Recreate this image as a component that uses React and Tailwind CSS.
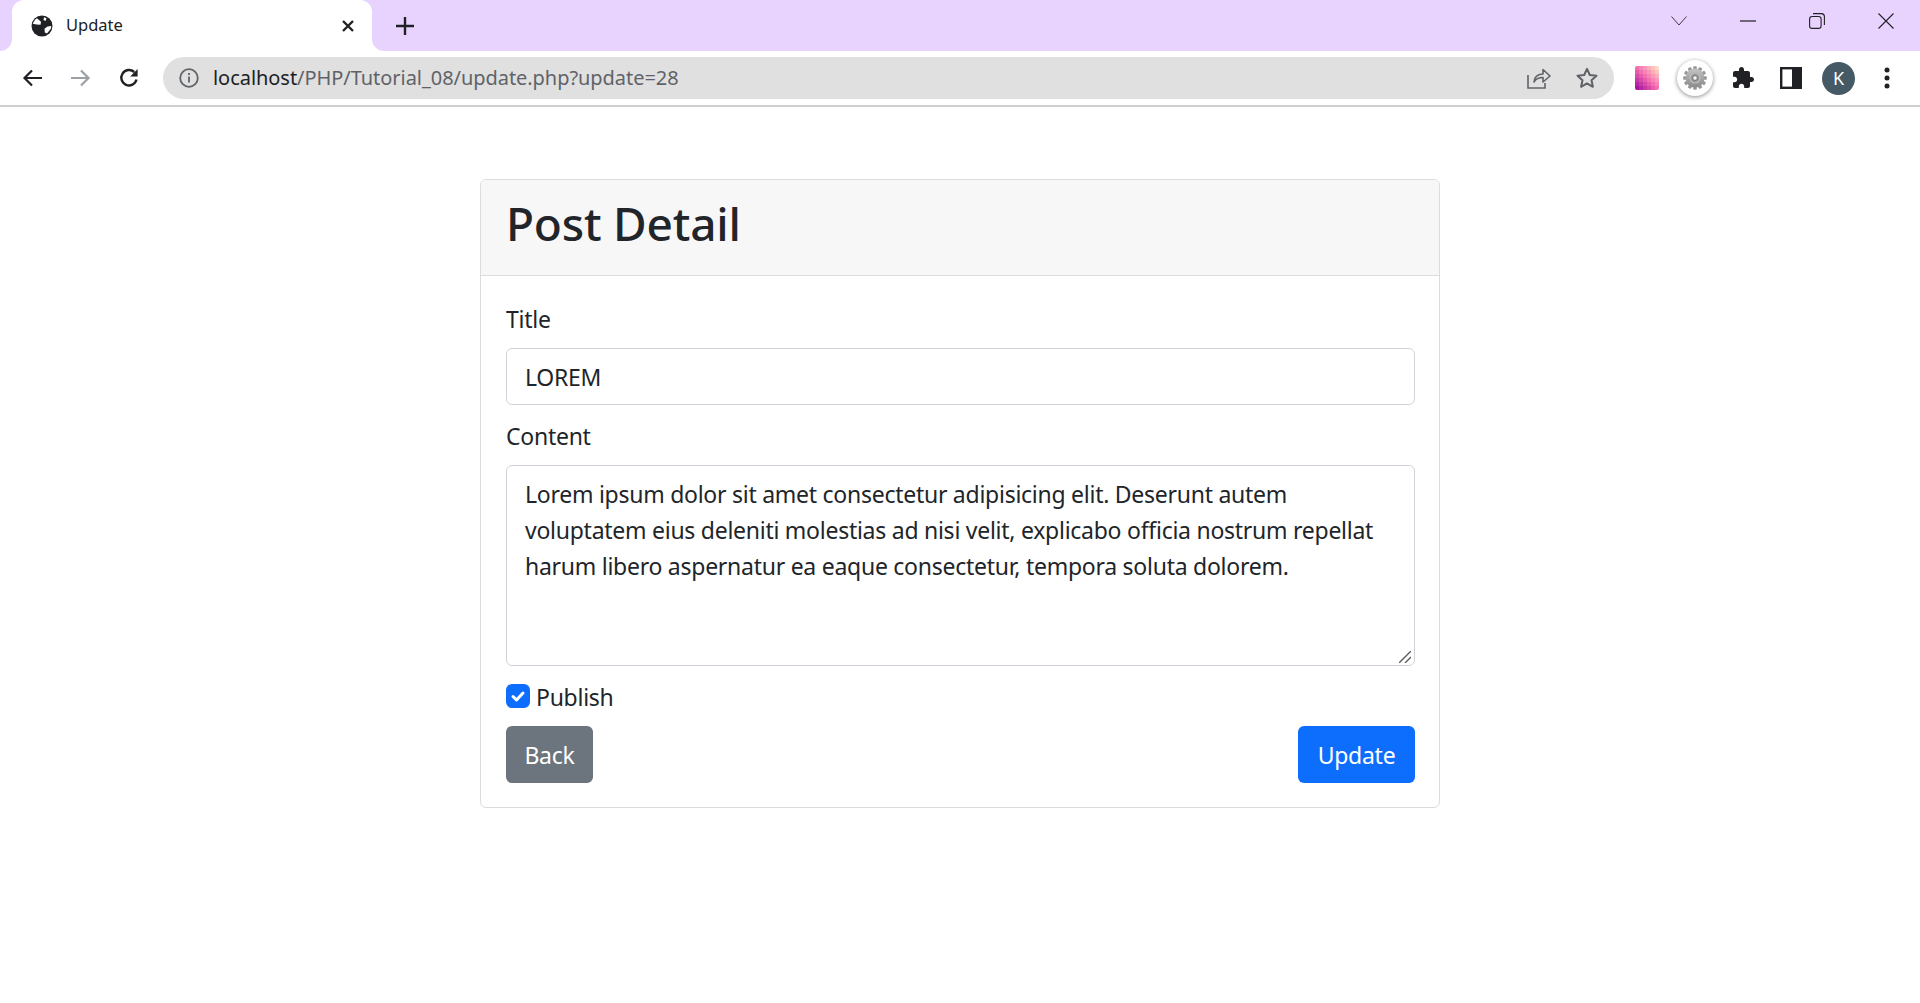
import React from "react";

function GlobeIcon() {
  return (
    <svg width="22" height="22" viewBox="0 0 22 22">
      <circle cx="11" cy="11" r="10.5" fill="#202124" />
      <path d="M6 3.200 10 6.800 9.500 9.800 5.500 9.600 1.800 8.800C2.500 6.500 4 4.500 6 3.200Z" fill="#fff" />
      <path d="M20.200 11 20 13.500 16 18.500 13.800 17.500 13.500 13.800 16.500 11.500Z" fill="#fff" />
      <path d="M13 2.200 15.500 3.200 14.500 6 12.500 5Z" fill="#fff" />
    </svg>
  );
}

function ShareIcon() {
  return (
    <svg width="24" height="22" viewBox="0 0 24 22" fill="none" stroke="#5f6368" strokeWidth="1.6">
      <path d="M1 8v13h17v-5" />
      <path d="M7 15c0-5 4-8 9-8V2.5l7 6.5-7 6v-4.5c-4 0-7 1-9 4.500Z" strokeLinejoin="round" />
    </svg>
  );
}

function GearIcon() {
  const teeth = [0, 30, 60, 90, 120, 150, 180, 210, 240, 270, 300, 330];
  return (
    <svg width="24" height="24" viewBox="0 0 24 24">
      <defs>
        <linearGradient id="gearBody" x1="0" y1="0" x2="0" y2="1">
          <stop offset="0" stopColor="#c4c4c4" />
          <stop offset="1" stopColor="#8a8a8a" />
        </linearGradient>
      </defs>
      {teeth.map((a) => (
        <rect key={a} x="10.2" y="0.2" width="3.6" height="5" rx="0.8" fill="#969696" transform={`rotate(${a} 12 12)`} />
      ))}
      <circle cx="12" cy="12" r="9.500" fill="url(#gearBody)" />
      <circle cx="12" cy="12" r="5" fill="#9a9a9a" stroke="#bdbdbd" strokeWidth="1.2" />
      <circle cx="12" cy="12" r="2.400" fill="#f2f2f2" stroke="#6e6e6e" />
    </svg>
  );
}

// little mosaic logo, colour runs from the bottom left corner to the top right
function mosaicColor(t) {
  const stops = t < 0.5 ? [[168, 21, 160], [244, 110, 176]] : [[244, 110, 176], [255, 216, 192]];
  const k = t < 0.5 ? t * 2 : (t - 0.5) * 2;
  const c = stops[0].map((v, i) => Math.round(v + (stops[1][i] - v) * k));
  return `rgb(${c[0]},${c[1]},${c[2]})`;
}

function MosaicIcon() {
  const cells = [0, 1, 2, 3, 4, 5];
  return (
    <svg className="ml-[21px] rounded-[2px]" width="24" height="24" viewBox="0 0 24 24">
      {cells.map((y) =>
        cells.map((x) => <rect key={`${x}-${y}`} x={x * 4} y={y * 4} width="4" height="4" fill={mosaicColor((x + 5 - y) / 10)} />)
      )}
    </svg>
  );
}

function BrowserChrome() {
  return (
    <div className="font-['Noto_Sans',sans-serif]">
      <div className="flex h-[51px] items-end bg-[#e8d3fe] pl-[12px]">
        <div className="relative flex h-[51px] w-[360px] items-center rounded-t-[12px] bg-white pl-[19px] pr-[17px]">
          <span className="absolute bottom-0 left-[-12px] h-[12px] w-[12px] bg-white">
            <span className="block h-[12px] w-[12px] rounded-br-[12px] bg-[#e8d3fe]"></span>
          </span>
          <span className="absolute bottom-0 right-[-12px] h-[12px] w-[12px] bg-white">
            <span className="block h-[12px] w-[12px] rounded-bl-[12px] bg-[#e8d3fe]"></span>
          </span>
          <GlobeIcon />
          <span className="ml-[13px] text-[16.500px] text-[#202124]">Update</span>
          <svg className="ml-auto" width="14" height="14" viewBox="0 0 14 14" stroke="#202124" strokeWidth="2.4">
            <path d="M2 2 12 12M12 2 2 12" />
          </svg>
        </div>
        <svg className="mb-[16px] ml-[24px]" width="18" height="18" viewBox="0 0 18 18" stroke="#202124" strokeWidth="2.4">
          <path d="M9 0v18M0 9h18" />
        </svg>
        <div className="mb-[22px] ml-auto flex w-[249px] items-center justify-between pr-[26px]">
          <svg width="16" height="10" viewBox="0 0 16 10" fill="none" stroke="#3c3c3c" strokeWidth="1">
            <path d="M.5.5 8 9 15.500.5" />
          </svg>
          <svg width="16" height="2" viewBox="0 0 16 2" stroke="#202124" strokeWidth="1.2">
            <path d="M0 1h16" />
          </svg>
          <svg width="16" height="16" viewBox="0 0 16 16" fill="none" stroke="#202124" strokeWidth="1.1">
            <rect x=".6" y="3.500" width="11.500" height="11.900" rx="2.500" />
            <path d="M4 .6h8.500A3 3 0 0 1 15.400 3.600V12" />
          </svg>
          <svg width="16" height="16" viewBox="0 0 16 16" stroke="#202124" strokeWidth="1.1">
            <path d="M.5.5l15 15M15.500.5l-15 15" />
          </svg>
        </div>
      </div>
      <div className="flex h-[56px] items-center border-b-2 border-[#cfcfcf]">
        <div className="flex w-[163px] items-center pl-[22px]">
          <svg width="20" height="18" viewBox="0 0 20 18" fill="none" stroke="#202124" strokeWidth="2.200">
            <path d="M20 9H2.500M10 1.500 2.500 9l7.500 7.500" />
          </svg>
          <svg className="ml-[29px]" width="20" height="18" viewBox="0 0 20 18" fill="none" stroke="#9aa0a6" strokeWidth="2.200">
            <path d="M0 9h17.500M10 1.500 17.500 9 10 16.500" />
          </svg>
          <svg className="ml-[28px]" width="20" height="20" viewBox="0 0 20 20" fill="none" stroke="#202124" strokeWidth="2.400">
            <path d="M17.500 11.500A7.700 7.700 0 1 1 15.200 4" />
            <path d="M18.600 1v7.400h-7.400z" fill="#202124" stroke="none" />
          </svg>
        </div>
        <div className="flex h-[42px] w-[1451px] items-center rounded-full bg-[#e0e0e0] pl-[16px] pr-[15px]">
          <svg width="20" height="20" viewBox="0 0 20 20" fill="none" stroke="#5f6368" strokeWidth="1.800">
            <circle cx="10" cy="10" r="8.800" />
            <path d="M10 8.500v6M10 5v2" />
          </svg>
          <span className="ml-[14px] text-[20px] tracking-[-0.05px] text-[#5f6368]">
            <span className="text-[#202124]">localhost</span>/PHP/Tutorial_08/update.php?update=28
          </span>
          <div className="ml-auto flex items-center gap-[24px]">
            <ShareIcon />
            <svg width="24" height="24" viewBox="0 0 24 24" fill="none" stroke="#5f6368" strokeWidth="2" strokeLinejoin="round">
              <path d="M12 2.800 14.800 9l6.700.7-5 4.500 1.400 6.600L12 17.400l-5.900 3.400 1.400-6.600-5-4.500L9.200 9z" />
            </svg>
          </div>
        </div>
        <MosaicIcon />
        <div className="ml-[18px] flex h-[36px] w-[36px] items-center justify-center rounded-full bg-white shadow-[0_1px_4px_rgba(0,0,0,0.45)]">
          <GearIcon />
        </div>
        <svg className="ml-[18px]" width="24" height="24" viewBox="0 0 24 24" fill="#202124">
          <path d="M20.500 11H19V7c0-1.100-.9-2-2-2h-4V3.500C13 2.120 11.880 1 10.500 1S8 2.120 8 3.500V5H4c-1.100 0-1.990.9-1.990 2v3.800H3.500c1.490 0 2.700 1.210 2.700 2.700s-1.210 2.700-2.700 2.700H2V20c0 1.100.9 2 2 2h3.800v-1.500c0-1.490 1.210-2.700 2.700-2.700 1.490 0 2.700 1.210 2.700 2.700V22H17c1.100 0 2-.9 2-2v-4h1.500c1.380 0 2.500-1.120 2.500-2.500S21.880 11 20.500 11z" />
        </svg>
        <svg className="ml-[25px]" width="22" height="22" viewBox="0 0 22 22" fill="none">
          <rect x="1.200" y="1.200" width="19.600" height="19.600" stroke="#202124" strokeWidth="2.400" />
          <rect x="12" y="1" width="9" height="20" fill="#202124" />
        </svg>
        <div className="ml-[20px] flex h-[33px] w-[33px] items-center justify-center rounded-full bg-[#455a64] text-[18px] text-white">
          K
        </div>
        <svg className="ml-[29px]" width="6" height="22" viewBox="0 0 6 22" fill="#202124">
          <circle cx="3" cy="3" r="2.500" />
          <circle cx="3" cy="11" r="2.500" />
          <circle cx="3" cy="19" r="2.500" />
        </svg>
      </div>
    </div>
  );
}

function App() {
  return (
    <div className="min-h-screen bg-white text-[#212529]">
      <BrowserChrome />
      <div className="flex justify-center pt-[72px] font-['Noto_Sans',sans-serif]">
        <div className="h-[629px] w-[960px] overflow-hidden rounded-[6px] border border-[#dcdcdc]">
          <div className="h-[96px] border-b border-[#dcdcdc] bg-[#f7f7f7] pl-[25px] pr-[24px] pt-[15px]">
            <h2 className="text-[46px] leading-[57px] font-medium tracking-[-0.2px]">Post Detail</h2>
          </div>
          <form className="pb-[24px] pl-[25px] pr-[24px] pt-[24px] text-[23px] leading-[36px] tracking-[-0.26px]">
            <label className="mb-[11px] block pt-[1px]">Title</label>
            <input
              type="text"
              defaultValue="LOREM"
              className="mb-[12px] block h-[57px] w-full rounded-[6px] border border-[#ced4da] px-[18px] text-[#212529]"
            />
            <label className="mb-[11px] block pt-[1px]">Content</label>
            <div className="relative mb-[12px] h-[201px]">
              <textarea
                rows={5}
                defaultValue="Lorem ipsum dolor sit amet consectetur adipisicing elit. Deserunt autem voluptatem eius deleniti molestias ad nisi velit, explicabo officia nostrum repellat harum libero aspernatur ea eaque consectetur, tempora soluta dolorem."
                className="block h-[201px] w-full resize-none rounded-[6px] border border-[#ced4da] px-[18px] py-[10px] text-[#212529]"
              />
              <svg className="absolute bottom-[3px] right-[4px]" width="12" height="12" viewBox="0 0 12 12" stroke="#5a5a5a" strokeWidth="1.4">
                <path d="M0 12 12 0M6 12 12 6" />
              </svg>
            </div>
            <div className="mb-[12px] flex h-[36px] items-center">
              <span className="flex h-[24px] w-[24px] items-center justify-center rounded-[6px] bg-[#0d6efd]">
                <svg width="16" height="16" viewBox="0 0 16 16" fill="none" stroke="#fff" strokeWidth="3" strokeLinecap="round" strokeLinejoin="round">
                  <path d="M3 8.500 6.500 12 13 5" />
                </svg>
              </span>
              <label className="ml-[6px] pt-[1px]">Publish</label>
            </div>
            <div className="flex justify-between">
              <button type="button" className="h-[57px] w-[87px] rounded-[6px] bg-[#6c757d] text-white">
                Back
              </button>
              <button type="button" className="h-[57px] w-[117px] rounded-[6px] bg-[#0d6efd] text-white">
                Update
              </button>
            </div>
          </form>
        </div>
      </div>
    </div>
  );
}

export default App;
